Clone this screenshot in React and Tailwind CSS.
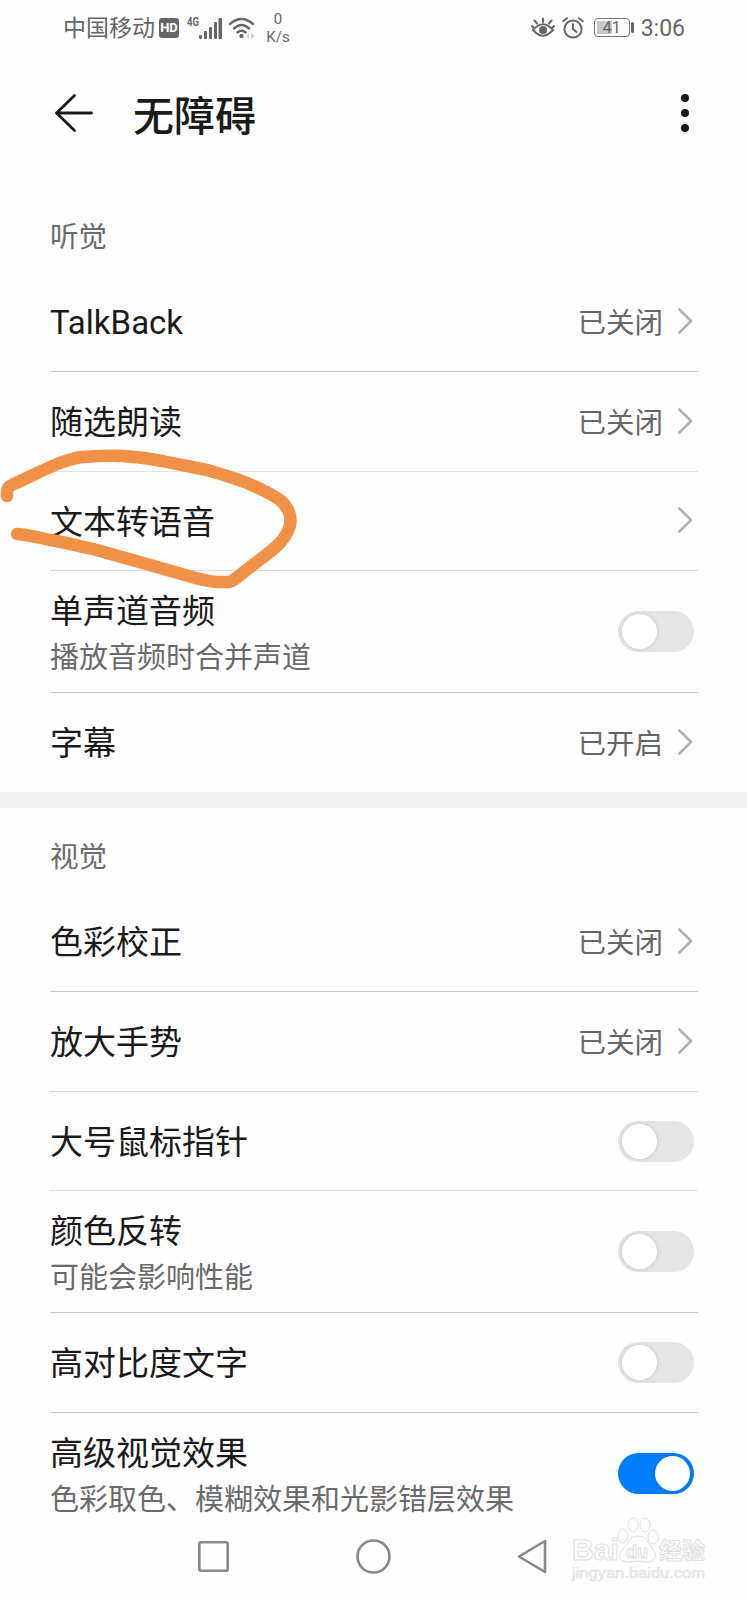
import React, { useState } from "react";
import clsx from "clsx";

const hearing = [
  { label: "TalkBack", value: "已关闭", height: "h-[100px]", line: "bg-[#c9c9c9]" },
  { label: "随选朗读", value: "已关闭", height: "h-[100px]", line: "bg-[#e2e2e2]" },
  { label: "文本转语音", value: "", height: "h-[99px]", line: "bg-[#dcdcdc]" },
  { label: "单声道音频", desc: "播放音频时合并声道", toggle: true, height: "h-[122px]", line: "bg-[#cdcdcd]" },
  { label: "字幕", value: "已开启", height: "h-[99px]" },
];

const vision = [
  { label: "色彩校正", value: "已关闭", height: "h-[100px]", line: "bg-[#c9c9c9]" },
  { label: "放大手势", value: "已关闭", height: "h-[100px]", line: "bg-[#dcdcdc]" },
  { label: "大号鼠标指针", toggle: true, height: "h-[99px]", line: "bg-[#e2e2e2]" },
  { label: "颜色反转", desc: "可能会影响性能", toggle: true, height: "h-[122px]", line: "bg-[#cdcdcd]" },
  { label: "高对比度文字", toggle: true, height: "h-[100px]", line: "bg-[#cdcdcd]" },
  { label: "高级视觉效果", desc: "色彩取色、模糊效果和光影错层效果", toggle: true, on: true, height: "h-[121px]" },
];

function Switch({ defaultOn }) {
  const [on, setOn] = useState(!!defaultOn);

  return (
    <button
      role="switch"
      aria-checked={on}
      onClick={() => setOn(!on)}
      className={clsx(
        "mr-1 flex h-[41px] w-[76px] shrink-0 items-center rounded-full px-1",
        on ? "justify-end bg-[#007dff]" : "justify-start bg-[#e5e5e5]"
      )}
    >
      <span className="size-[35px] rounded-full bg-white shadow-[0_0_4px_rgba(0,0,0,0.14)]" />
    </button>
  );
}

function Chevron() {
  return (
    <svg className="mr-[5px] mb-[2px] ml-[14px]" width="16" height="28" viewBox="0 0 16 28" fill="none" stroke="#b0b0b0" strokeWidth="2.6" strokeLinecap="round" strokeLinejoin="round">
      <path d="M2.3 2.3 L14 14 L2.3 25.7" />
    </svg>
  );
}

function Row({ item }) {
  return (
    <div className={clsx("flex flex-col", item.height)}>
      <div className="flex flex-1 items-center justify-between">
        <div className={clsx("flex flex-col", item.desc ? "pt-[7px]" : "pt-[3px]")}>
          <span className="text-[33px] leading-[46px] text-[#1a1a1a]">{item.label}</span>
          {item.desc && <span className="text-[29px] leading-[46px] text-[#6a6a6a]">{item.desc}</span>}
        </div>
        {item.toggle ? (
          <Switch defaultOn={item.on} />
        ) : (
          <div className="flex items-center">
            <span className="pt-[4px] text-[28.5px] leading-[46px] text-[#666]">{item.value}</span>
            <Chevron />
          </div>
        )}
      </div>
      {item.line && <div className={clsx("h-px", item.line)} />}
    </div>
  );
}

function Section({ title, items }) {
  return (
    <section className="pr-[49px] pl-[50px]">
      <h2 className="flex h-[84px] items-center pt-4 text-[28.5px] text-[#6b6b6b]">{title}</h2>
      {items.map((item) => (
        <Row key={item.label} item={item} />
      ))}
    </section>
  );
}

function StatusBar() {
  return (
    <div className="flex h-[56px] items-center justify-between pr-[62px] pl-[63px] text-[#666]">
      <div className="flex items-center">
        <span className="pt-[3px] text-[23px] leading-[30px]">中国移动</span>
        <span className="ml-[4px] flex h-[20px] w-[20px] items-center justify-center rounded-[3px] bg-[#666] font-['Roboto'] text-[13px] font-bold text-white">HD</span>
        <svg className="ml-[8px]" width="36" height="24" viewBox="0 0 36 24" fill="#666">
          <text x="0" y="10" fontFamily="Roboto" fontSize="12" fontWeight="700" textLength="12" lengthAdjust="spacingAndGlyphs">4G</text>
          <rect x="12" y="19" width="3" height="4" rx="1" />
          <rect x="17" y="15" width="3" height="8" rx="1" />
          <rect x="22" y="11" width="3" height="12" rx="1" />
          <rect x="27" y="6" width="3" height="17" rx="1" />
          <rect x="31.5" y="2" width="3.5" height="21" rx="1" />
        </svg>
        <svg className="ml-[5px]" width="28" height="24" viewBox="0 0 28 24" fill="none" stroke="#666" strokeWidth="2.4" strokeLinecap="round">
          <path d="M2 8 Q13.5 -2 25 8" />
          <path d="M6 12.5 Q13.5 5.5 21 12.5" />
          <path d="M9.5 16.5 Q13.5 13 17.5 16.5" />
          <circle cx="13.5" cy="20" r="2.2" fill="#666" stroke="none" />
          <path d="M21 17 V23 L18 20 Z M23 17 V23 L27 20 Z" fill="#ccc" stroke="none" />
        </svg>
        <div className="ml-[9px] flex w-[26px] flex-col items-center pt-px font-['Roboto'] text-[15px] leading-[18px]">
          <span>0</span>
          <span>K/s</span>
        </div>
      </div>
      <div className="flex items-center">
        <svg width="24" height="22" viewBox="0 0 24 22" fill="none" stroke="#666" strokeWidth="2" strokeLinecap="round">
          <path d="M2 13 Q12 1.5 22 13 Q12 24.5 2 13 Z" />
          <circle cx="12" cy="13" r="4" fill="#666" stroke="none" />
          <path d="M12 5 V1.5 M6 6.5 L3.5 3.5 M18 6.5 L20.5 3.5 M2.5 10.5 L1 9 M21.5 10.5 L23 9" />
        </svg>
        <svg className="ml-[7px]" width="22" height="22" viewBox="0 0 22 22" fill="none" stroke="#666" strokeWidth="2" strokeLinecap="round">
          <circle cx="11" cy="12" r="8.6" />
          <path d="M11 7 V12 L14.5 15 M1.2 4.2 L5 1.2 M20.8 4.2 L17 1.2" />
        </svg>
        <div className="ml-[10px] flex items-center gap-[1px]">
          <div className="h-[19px] w-[36px] rounded-[4px] border border-[#777] p-[2px]">
            <div className="flex h-full w-full items-center justify-center bg-linear-to-r from-[#c8c8c8] from-50% to-transparent to-50% font-['Roboto'] text-[16px] leading-none">41</div>
          </div>
          <div className="h-[11px] w-[3px] rounded-sm bg-[#666]" />
        </div>
        <span className="ml-[7px] pt-[2px] font-['Roboto'] text-[23px] leading-[30px]">3:06</span>
      </div>
    </div>
  );
}

function Header() {
  return (
    <header className="flex h-[120px] items-center pr-[57px] pl-[55px]">
      <svg className="mb-[5px]" width="38" height="38" viewBox="0 0 38 38" fill="none" stroke="#1a1a1a" strokeWidth="2.8" strokeLinecap="round" strokeLinejoin="round">
        <path d="M19.5 1.5 L1.5 19 L19.5 36.5 M1.5 19 H36.5" />
      </svg>
      <h1 className="ml-[40px] flex-1 pt-[2px] text-[41px] leading-[56px] font-medium text-[#1a1a1a]">无障碍</h1>
      <svg className="mb-[5px]" width="10" height="40" viewBox="0 0 10 40" fill="#1a1a1a">
        <circle cx="5" cy="5" r="4" />
        <circle cx="5" cy="20" r="4" />
        <circle cx="5" cy="35" r="4" />
      </svg>
    </header>
  );
}

function NavBar() {
  return (
    <nav className="flex h-[65px] items-start pl-[197px]">
      <svg width="352" height="44" viewBox="0 0 352 44" fill="none" stroke="#888" strokeWidth="2.6" strokeLinejoin="round">
        <rect x="2.3" y="8.3" width="28.4" height="28.4" rx="1.5" />
        <circle cx="176.5" cy="22.5" r="16" />
        <path d="M348 7 V38 L322 22.5 Z" />
      </svg>
    </nav>
  );
}

function Watermark() {
  return (
    <svg className="absolute right-[37px] bottom-[12px]" width="142" height="76" viewBox="0 0 142 76" fill="#fefefe" stroke="#dedede" strokeWidth="1" strokeLinejoin="round">
      <text x="4" y="49" fontFamily="Liberation Sans" fontSize="29" fontWeight="700" textLength="47" lengthAdjust="spacingAndGlyphs">Bai</text>
      <ellipse cx="55" cy="25" rx="5" ry="7" />
      <ellipse cx="65" cy="14" rx="5" ry="7" />
      <ellipse cx="77" cy="14" rx="5" ry="7" />
      <ellipse cx="85" cy="26" rx="5" ry="7" />
      <path d="M70 25 C61 25 60 34 55 38 C47 46 54 52 61 51 Q70 49 78 51 C88 52 90 43 84 37 C80 33 79 25 70 25 Z" />
      <text x="58" y="47" fontFamily="Liberation Sans" fontSize="18" fontWeight="700">du</text>
      <text x="91" y="48" fontFamily="Noto Sans CJK SC" fontSize="23" fontWeight="700">经验</text>
      <text x="4" y="67" fontFamily="Liberation Sans" fontSize="15" textLength="133" lengthAdjust="spacingAndGlyphs" fill="#f6f6f6" strokeWidth="0.6">jingyan.baidu.com</text>
    </svg>
  );
}

// hand drawn loop around the text-to-speech row
function Marker() {
  return (
    <svg className="pointer-events-none absolute top-[440px] left-0" width="310" height="160" viewBox="0 0 310 160" fill="none" stroke="#f09147" strokeWidth="12.5" strokeLinecap="round" strokeLinejoin="round">
      <path d="M7 56 C7 47 8 47 14 44 C28 38 44 29 60 23 C68 20 74 18 82 17 C96 16 109 15 123 16 C138 17 153 19 167 22 L207 30 C221 34 234 38 247 43 C259 48 270 53 280 60 C287 66 291 73 290.500 82 C290 90 285 97 280 103 C272 111 262 118 253 125 L235 139 C231 143 226 142 219 142 C212 142 206 140 199 139 L143 123 L93 109 C78 106 65 102 50 100 C38 97 29 95 17 94" />
    </svg>
  );
}

function App() {
  return (
    <div className="relative flex h-[1599px] w-[747px] flex-col overflow-hidden bg-[#fefefe] font-['Roboto','Noto_Sans_CJK_SC',sans-serif]">
      <StatusBar />
      <Header />
      <div className="h-[13px]" />
      <Section title="听觉" items={hearing} />
      <div className="h-[16px] bg-[#f1f1f1]" />
      <Section title="视觉" items={vision} />
      <NavBar />
      <Marker />
      <Watermark />
    </div>
  );
}

export default App;
